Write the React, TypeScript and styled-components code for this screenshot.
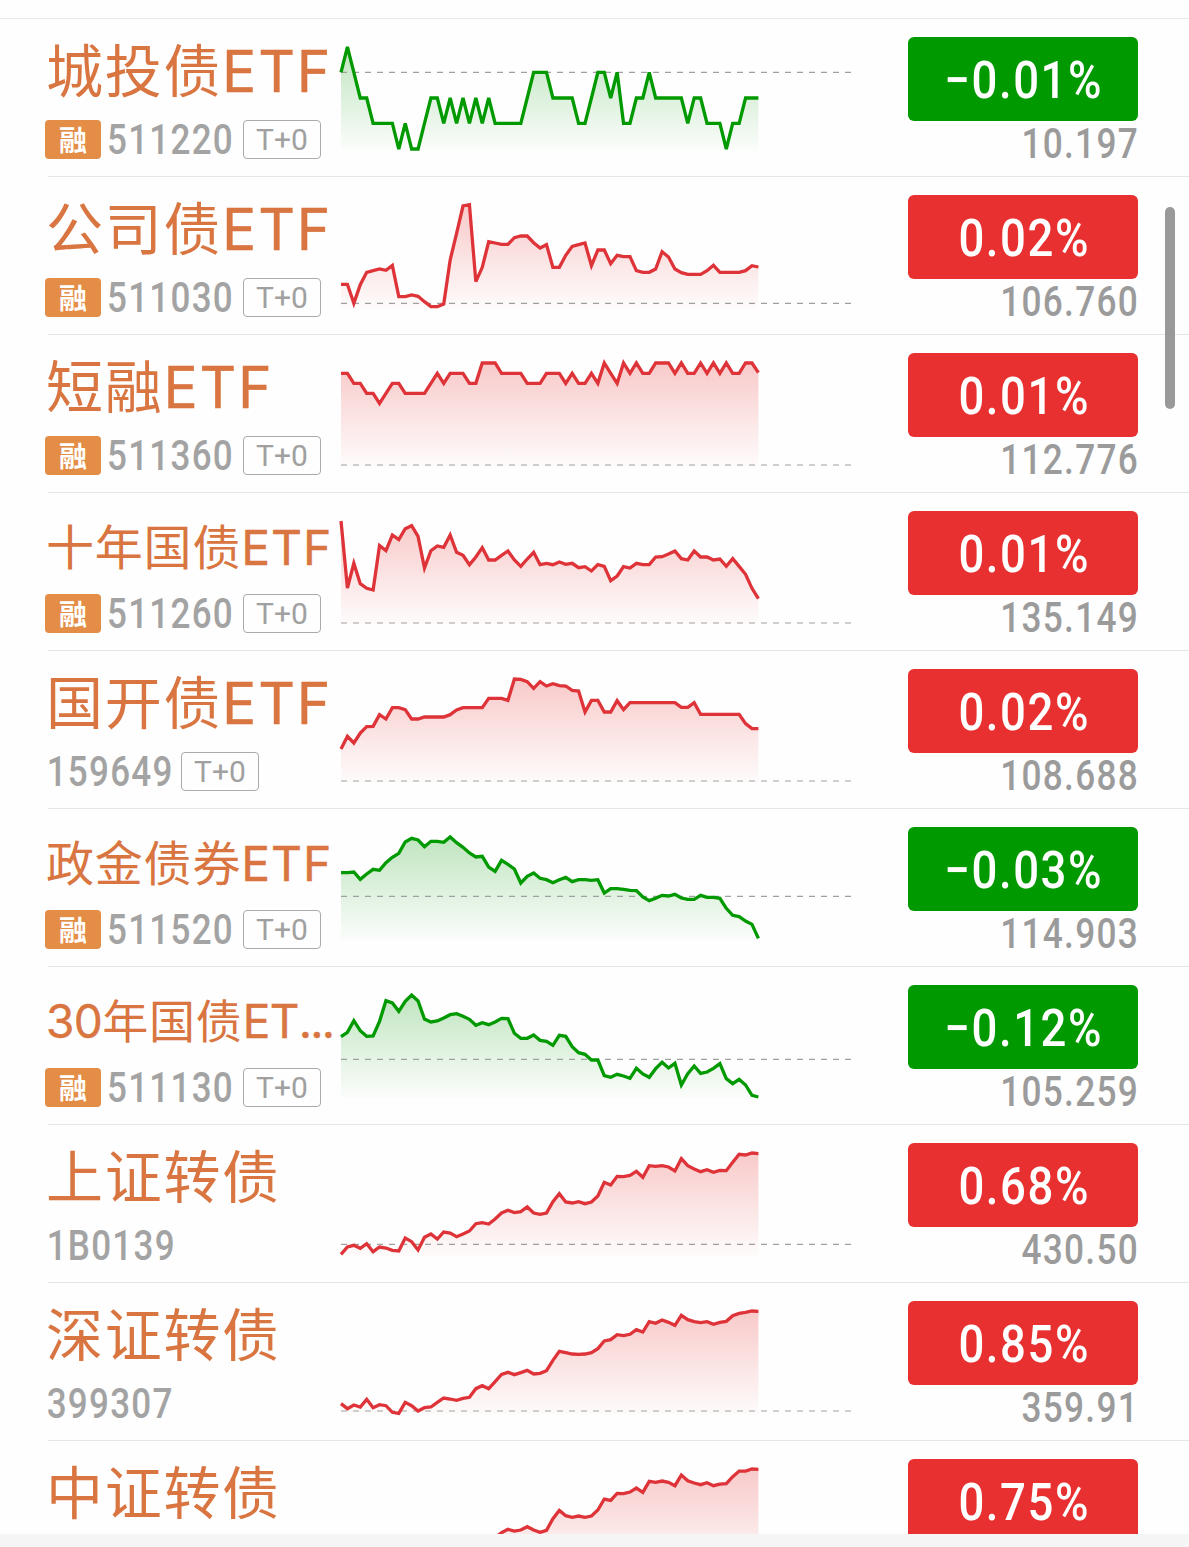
import React from "react";
import styled, { createGlobalStyle } from "styled-components";

const RED = "#e93030";
const GREEN = "#009900";

const GlobalStyle = createGlobalStyle`
  *, *::before, *::after { box-sizing: border-box; }
  body { margin: 0; background: #fefefe; }
`;

const Screen = styled.main`
  position: relative;
  display: flex;
  flex-direction: column;
  width: 1189px;
  height: 1547px;
  overflow: hidden;
  background: #fefefe;
  font-family: Roboto, "Noto Sans CJK SC", sans-serif;
`;

const TopEdge = styled.div`
  flex: none;
  height: 19px;
  border-bottom: 1px solid #e8e8e8;
`;

const List = styled.div`
  flex: none;
  height: 1515px;
  overflow: hidden;
`;

const BottomStrip = styled.div`
  flex: 1;
  background: #f5f5f5;
`;

const Row = styled.section`
  display: grid;
  grid-template-columns: 296px 567px 230px;
  height: 157px;
  padding-left: 45px;
`;

const Divider = styled.div`
  height: 1px;
  margin-left: 48px;
  background: #e6e6e6;
`;

const Info = styled.div`
  display: flex;
  flex-direction: column;
  min-width: 0;
`;

const Name = styled.div<{ $size: number; $spacing: number; $drop: number }>`
  height: 101px;
  padding: ${(p) => p.$drop}px 0 0 1px;
  color: #d87540;
  font-family: "Noto Sans CJK SC", sans-serif;
  font-size: ${(p) => p.$size}px;
  line-height: 84px;
  letter-spacing: ${(p) => p.$spacing}px;
  white-space: nowrap;
`;

const Latin = styled.span<{ $spacing: number }>`
  font-family: Inter, "Noto Sans CJK SC", sans-serif;
  font-weight: 400;
  -webkit-text-stroke: 0.4px #d87540;
  letter-spacing: ${(p) => p.$spacing}px;
  line-height: 1;
`;

const Meta = styled.div`
  display: flex;
  align-items: center;
  height: 39px;
`;

const Badge = styled.span`
  display: flex;
  align-items: center;
  justify-content: center;
  width: 56px;
  height: 39px;
  margin-right: 6px;
  border-radius: 4px;
  background: #e48d47;
  color: #fff;
  font-family: "Noto Sans CJK SC", sans-serif;
  font-size: 28px;
  font-weight: 700;
  line-height: 39px;
`;

const Code = styled.span<{ $inset: boolean }>`
  flex: none;
  width: 125px;
  padding-left: ${(p) => (p.$inset ? 2 : 0)}px;
  color: #a3a3a3;
  font-size: 41.7px;
  font-weight: 500;
  letter-spacing: 1.5px;
  line-height: 39px;
  transform: scaleX(0.84);
  transform-origin: left center;
`;

const Chip = styled.span`
  display: flex;
  align-items: center;
  justify-content: center;
  width: 78px;
  height: 39px;
  margin-left: 11px;
  border: 1.5px solid #aaa;
  border-radius: 4px;
  color: #a0a0a0;
  font-size: 30px;
  line-height: 37px;
`;

const Chart = styled.svg`
  display: block;
  width: 567px;
  height: 157px;
  overflow: visible;
`;

const Quote = styled.div`
  display: flex;
  flex-direction: column;
  padding-top: 18px;
`;

const Change = styled.div<{ $down: boolean }>`
  display: flex;
  align-items: center;
  justify-content: center;
  height: 84px;
  padding: 3px 0 0 2px;
  border-radius: 6px;
  background: ${(p) => (p.$down ? GREEN : RED)};
`;

const ChangeText = styled.span`
  color: #fff;
  font-size: 52px;
  font-weight: 500;
  letter-spacing: 1.8px;
  line-height: 80px;
  transform: scaleX(0.875);
`;

const Price = styled.div`
  height: 46px;
  margin-right: -1px;
  color: #9b9b9b;
  font-size: 41.7px;
  font-weight: 500;
  letter-spacing: 1.5px;
  line-height: 46px;
  text-align: right;
  transform: scaleX(0.845);
  transform-origin: right center;
`;

const ScrollThumb = styled.div`
  position: absolute;
  top: 207px;
  right: 14px;
  width: 10px;
  height: 202px;
  border-radius: 5px;
  background: #999;
`;

type Item = {
  name: string;
  size: number;
  code?: string;
  badge?: boolean;
  t0?: boolean;
  change: string;
  price?: string;
  down?: boolean;
  top: number;
  base: number;
  points: number[];
};

const rep = (value: number, times: number): number[] => Array(times).fill(value);

const items: Item[] = [
  {
    name: "城投债ETF", size: 57, code: "511220", badge: true, t0: true,
    change: "−0.01%", price: "10.197", down: true, top: 2, base: 157,
    points: [157, 81, 157, 234, 234, ...rep(310, 4), 387, 310, 387, 387, 310, 234, 234, 310, 234, 310, 234, 310, 234, 310, 234, ...rep(310, 5), 234, 157, 157, 157, ...rep(234, 4), 310, 310, 234, 157, 157, 234, 157, 310, 310, 234, 234, 157, ...rep(234, 5), 310, 234, 234, 310, 310, 310, 387, 310, 310, 234, 234, 234],
  },
  {
    name: "公司债ETF", size: 57, code: "511030", badge: true, t0: true,
    change: "0.02%", price: "106.760", top: 14, base: 340,
    points: [283, 283, 340, 284, 247, 242, 237, 241, 226, 320, 320, 315, 319, 335, 350, 350, 342, 210, 130, 48, 44, 275, 232, 155, 159, 163, 163, 143, 138, 138, 158, 174, 164, 232, 232, 196, 169, 164, 159, 227, 180, 180, 221, 196, 200, 200, 242, 247, 247, 237, 185, 201, 237, 248, 253, 253, 253, 242, 226, 247, 247, 247, 247, 242, 227, 231],
  },
  {
    name: "短融ETF", size: 57, code: "511360", badge: true, t0: true,
    change: "0.01%", price: "112.776", top: 16, base: 345,
    points: [70, 70, 100, 100, 130, 130, 160, 130, 100, 100, 130, 130, 130, 130, 100, 70, 100, 70, 70, 70, 100, 100, 39, 39, 39, 70, 70, 70, 70, 100, 100, 100, 70, 70, 70, 100, 70, 100, 100, 70, 100, 39, 70, 100, 39, 70, 39, 70, 70, 39, 39, 39, 70, 39, 70, 70, 39, 70, 39, 70, 39, 70, 70, 39, 39, 68],
  },
  {
    name: "十年国债ETF", size: 48, code: "511260", badge: true, t0: true,
    change: "0.01%", price: "135.149", top: 18, base: 339,
    points: [33, 234, 160, 221, 235, 240, 107, 122, 75, 89, 56, 47, 79, 174, 122, 108, 112, 75, 127, 136, 164, 141, 113, 150, 150, 136, 123, 150, 169, 147, 127, 164, 160, 164, 156, 163, 160, 173, 170, 183, 164, 169, 212, 198, 170, 174, 160, 164, 164, 141, 140, 132, 123, 146, 150, 123, 141, 141, 150, 147, 169, 146, 169, 193, 235, 266],
  },
  {
    name: "国开债ETF", size: 57, code: "159649", t0: true,
    change: "0.02%", price: "108.688", top: 18, base: 339,
    points: [243, 205, 225, 195, 176, 175, 140, 153, 119, 119, 125, 153, 153, 147, 147, 147, 147, 140, 126, 119, 119, 119, 119, 91, 91, 91, 97, 33, 34, 41, 61, 41, 54, 47, 53, 54, 67, 69, 132, 97, 97, 132, 132, 98, 125, ...rep(104, 8), 118, 118, 104, ...rep(139, 7), 167, 182, 182],
  },
  {
    name: "政金债券ETF", size: 48, code: "511520", badge: true, t0: true,
    change: "−0.03%", price: "114.903", down: true, top: 18, base: 211,
    points: [140, 140, 138, 160, 144, 130, 133, 110, 94, 82, 48, 37, 42, 62, 46, 46, 49, 33, 50, 64, 81, 93, 91, 123, 136, 103, 115, 129, 171, 151, 141, 157, 161, 170, 161, 154, 167, 161, 161, 163, 161, 201, 188, 188, 190, 193, 194, 213, 224, 217, 208, 210, 205, 216, 220, 220, 208, 214, 214, 217, 247, 268, 272, 285, 295, 337],
  },
  {
    name: "30年国债ET...", size: 46, code: "511130", badge: true, t0: true,
    change: "−0.12%", price: "105.259", down: true, top: 18, base: 226,
    points: [158, 145, 110, 140, 157, 156, 112, 50, 57, 82, 52, 33, 51, 105, 114, 111, 102, 92, 89, 97, 106, 124, 116, 122, 114, 103, 104, 148, 163, 163, 153, 169, 172, 184, 154, 157, 188, 206, 211, 228, 228, 275, 280, 271, 276, 283, 253, 270, 280, 254, 235, 252, 238, 303, 269, 246, 268, 264, 253, 239, 284, 299, 286, 303, 334, 339],
  },
  {
    name: "上证转债", size: 57, code: "1B0139",
    change: "0.68%", price: "430.50", top: 18, base: 307,
    points: [337, 315, 310, 319, 305, 329, 315, 318, 325, 327, 288, 299, 324, 286, 276, 291, 270, 273, 284, 276, 267, 245, 242, 246, 231, 213, 205, 212, 209, 195, 213, 217, 213, 179, 155, 180, 183, 179, 185, 180, 162, 121, 129, 103, 104, 100, 88, 106, 71, 73, 71, 75, 87, 50, 71, 81, 89, 83, 91, 85, 86, 61, 37, 39, 33, 35],
  },
  {
    name: "深证转债", size: 57, code: "399307",
    change: "0.85%", price: "359.91", top: 18, base: 333,
    points: [311, 326, 315, 321, 298, 323, 314, 317, 337, 340, 307, 317, 333, 323, 321, 307, 294, 297, 301, 295, 292, 266, 257, 266, 245, 223, 217, 224, 218, 211, 222, 220, 212, 181, 154, 158, 162, 163, 162, 158, 146, 123, 119, 104, 107, 103, 89, 96, 65, 70, 60, 67, 76, 46, 59, 65, 68, 65, 73, 67, 64, 47, 40, 37, 33, 34],
  },
  {
    name: "中证转债", size: 57,
    change: "0.75%", top: 15.7, base: 330,
    points: [...rep(325, 12), 318, 312, 308, 304, 300, 296, 292, 286, 280, 268, 262, 258, 246, 231, 221, 226, 223, 213, 223, 230, 224, 189, 164, 180, 185, 181, 185, 181, 163, 130, 134, 113, 114, 109, 97, 110, 77, 80, 76, 80, 90, 58, 75, 82, 87, 81, 90, 85, 84, 63, 46, 46, 40, 41],
  },
];

const STEP = 417.4 / 65;
const FLOOR = 132;

function Sparkline({ item, id }: { item: Item; id: string }) {
  const color = item.down ? GREEN : "#de3338";
  const toY = (v: number) => v / 3 + item.top - 1;
  const line = item.points
    .map((v, i) => `${(i * STEP).toFixed(2)},${toY(v).toFixed(2)}`)
    .join(" ");
  const end = (item.points.length - 1) * STEP;
  return (
    <Chart viewBox="0 0 567 157">
      <defs>
        <linearGradient id={id} gradientUnits="userSpaceOnUse" x1="0" y1="26" x2="0" y2={FLOOR}>
          <stop offset="0" stopColor={item.down ? "#0a9a0a" : RED} stopOpacity="0.26" />
          <stop offset="1" stopColor={item.down ? "#0a9a0a" : RED} stopOpacity="0.01" />
        </linearGradient>
      </defs>
      <polygon points={`0,${FLOOR} ${line} ${end},${FLOOR}`} fill={`url(#${id})`} />
      <line x1="0" x2="511" y1={toY(item.base)} y2={toY(item.base)} stroke="#a0a0a0" strokeWidth="1.1" strokeDasharray="6 6" />
      <polyline points={line} fill="none" stroke={color} strokeWidth="3.3" />
    </Chart>
  );
}

// Latin runs sit in their own span so that they take the wider Latin face.
function NameText({ text, spacing }: { text: string; spacing: number }) {
  return (
    <>
      {text.split(/([A-Z0-9]+|\.+)/).filter(Boolean).map((part, i) =>
        /^[A-Z0-9.]/.test(part) ? (
          <Latin key={i} $spacing={part[0] === "." ? -1.8 : spacing}>{part}</Latin>
        ) : (
          <React.Fragment key={i}>{part}</React.Fragment>
        ),
      )}
    </>
  );
}

export default function App() {
  return (
    <Screen>
      <GlobalStyle />
      <TopEdge />
      <List>
        {items.map((item, i) => (
          <React.Fragment key={item.name}>
            <Row>
              <Info>
                <Name $size={item.size} $spacing={item.size === 57 ? 1.7 : 0.8} $drop={item.size === 57 ? 6 : 9}>
                  <NameText text={item.name} spacing={item.size === 46 ? -0.6 : item.size === 57 ? 1.8 : 1} />
                </Name>
                {item.code && (
                  <Meta>
                    {item.badge && <Badge>融</Badge>}
                    <Code $inset={!item.badge}>{item.code}</Code>
                    {item.t0 && <Chip>T+0</Chip>}
                  </Meta>
                )}
              </Info>
              <Sparkline item={item} id={`fill-${i}`} />
              <Quote>
                <Change $down={!!item.down}>
                  <ChangeText>{item.change}</ChangeText>
                </Change>
                {item.price && <Price>{item.price}</Price>}
              </Quote>
            </Row>
            <Divider />
          </React.Fragment>
        ))}
      </List>
      <BottomStrip />
      <ScrollThumb />
    </Screen>
  );
}
